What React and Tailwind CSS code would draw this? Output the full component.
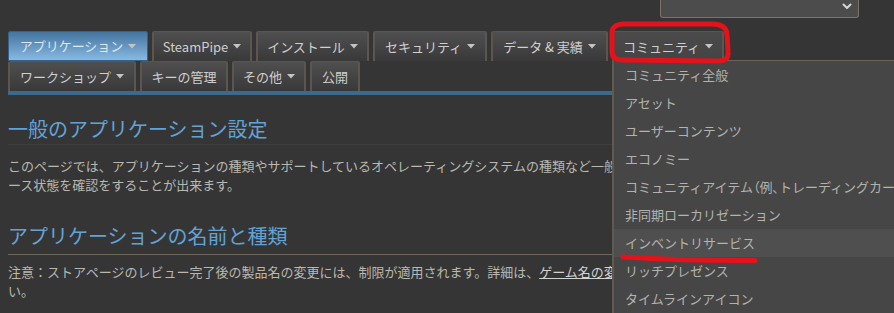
import clsx from 'clsx'

const row1 = [
    { label: 'アプリケーション', w: 'w-[140px]', arrow: true, active: true },
    { label: 'SteamPipe', w: 'w-[100px]', arrow: true },
    { label: 'インストール', w: 'w-[113px]', arrow: true },
    { label: 'セキュリティ', w: 'w-[114px]', arrow: true },
    { label: 'データ & 実績', w: 'w-[117px]', arrow: true },
]

const row2 = [
    { label: 'ワークショップ', w: 'w-[128px]', arrow: true },
    { label: 'キーの管理', w: 'w-[88px]' },
    { label: 'その他', w: 'w-[74px]', arrow: true },
    { label: '公開', w: 'w-[50px]' },
]

const menuItems = [
    'コミュニティ全般',
    'アセット',
    'ユーザーコンテンツ',
    'エコノミー',
    'items',
    '非同期ローカリゼーション',
    'インベントリサービス',
    'リッチプレゼンス',
    'タイムラインアイコン',
    'その他',
]

function Caret() {
    return (
        <svg className="w-[8px] h-[5px] ml-[5px] shrink-0" viewBox="0 0 8 5">
            <polygon points="0,0 8,0 4,4.5" fill="#c4c4c4" />
        </svg>
    )
}

function Tab({ label, w, arrow, active }) {
    return (
        <div
            className={clsx(
                'h-[30px] flex items-center justify-center rounded-t-[2px] text-[13px] whitespace-nowrap',
                w,
                active
                    ? 'bg-gradient-to-b from-[#44759f] to-[#88b9e3] border border-[#35628a] text-[#dde7f0]'
                    : 'bg-gradient-to-b from-[#4f4f4f] to-[#393939] border-x-2 border-t border-x-[#5b574f] border-t-[#565656] text-[#cfcfcf]'
            )}
        >
            <span>{label}</span>
            {arrow && <Caret />}
        </div>
    )
}

export default function App() {
    return (
        <div className="relative w-[894px] h-[313px] overflow-hidden bg-[#353535] font-['Noto_Sans_CJK_JP','Noto_Sans',sans-serif]">
            {/* top select */}
            <div className="flex justify-end pr-[35px] h-[31px]">
                <div className="w-[199px] h-[18px] bg-[#4c4c4c] border-x border-b border-[#7a7467] rounded-b-[3px] flex items-start justify-end pr-[6px] pt-[3px]">
                    <svg className="w-[10px] h-[7px]" viewBox="0 0 10 7" fill="none">
                        <path d="M1.5 1.5 L5 5 L8.5 1.5" stroke="#d4d4d4" strokeWidth="2" strokeLinecap="round" strokeLinejoin="round" />
                    </svg>
                </div>
            </div>

            <div className="px-2">
                {/* tabs */}
                <div className="flex gap-1">
                    {row1.map((t) => (
                        <Tab key={t.label} {...t} />
                    ))}
                    <div className="w-[112px] h-[30px] flex items-center justify-center text-[13px] text-[#cfcfcf] bg-gradient-to-b from-[#4a4a4a] to-[#444444] border-x-2 border-t border-x-[#5b574f] border-t-[#565656] rounded-t-[2px]">
                        <span>コミュニティ</span>
                        <Caret />
                    </div>
                </div>
                <div className="flex gap-1">
                    {row2.map((t) => (
                        <Tab key={t.label} {...t} />
                    ))}
                </div>
                <div className="h-[4px] bg-[#3b6a90]"></div>

                {/* content */}
                <h1 className="mt-[20px] pb-[1px] text-[20px] leading-[28px] text-[#62a3d7] border-b border-[#3d3d3d]">
                    一般のアプリケーション設定
                </h1>
                <p className="mt-[11px] text-[13px] leading-[19px] text-[#b8b8b0] whitespace-nowrap">
                    このページでは、アプリケーションの種類やサポートしているオペレーティングシステムの種類など一般的な情報を設定し、リリ
                    <br />
                    ース状態を確認をすることが出来ます。
                </p>

                <h2 className="mt-[28px] pb-[4px] text-[20px] leading-[28px] text-[#62a3d7] border-b border-[#6f6859]">
                    アプリケーションの名前と種類
                </h2>
                <p className="mt-[7px] text-[13px] leading-[19px] text-[#b8b8b0] whitespace-nowrap">
                    注意：ストアページのレビュー完了後の製品名の変更には、制限が適用されます。詳細は、
                    <span className="underline text-[#d2d2d2]">ゲーム名の変更について</span>
                    をご覧くださ
                    <br />
                    い。
                </p>
            </div>

            {/* open dropdown menu */}
            <div className="absolute left-[612px] top-[61px] w-[330px] bg-[#464646] border-l-2 border-[#5f5a50]">
                <div className="absolute left-[110px] -top-px right-0 h-px bg-[#6a6458]"></div>
                {menuItems.map((item) => (
                    <div
                        key={item}
                        className={clsx(
                            'h-[28px] flex items-center pl-[11px] text-[13px] text-[#b3b3ad] whitespace-nowrap',
                            item === 'インベントリサービス' && 'bg-[#4f4f4f]'
                        )}
                    >
                        {item === 'items' ? (
                            <span>
                                コミュニティアイテム
                                <span className="[font-feature-settings:'palt']">（</span>例
                                <span className="[font-feature-settings:'palt']">、</span>
                                トレーディングカード、絵文字など）
                            </span>
                        ) : (
                            item
                        )}
                    </div>
                ))}
            </div>

            {/* red annotations */}
            <svg className="absolute inset-0 pointer-events-none" width="894" height="313" viewBox="0 0 894 313" fill="none">
                <path
                    d="M612 34 Q611 25 623 24 L712 24 Q726 24 727 34 L728 52 Q729 61 718 61 L623 60 Q612 60 612 52 Z"
                    stroke="#e3121b"
                    strokeWidth="5"
                    strokeLinejoin="round"
                />
                <path d="M623 257 Q690 261 755 260.5" stroke="#e3121b" strokeWidth="5" strokeLinecap="round" />
            </svg>
        </div>
    )
}
